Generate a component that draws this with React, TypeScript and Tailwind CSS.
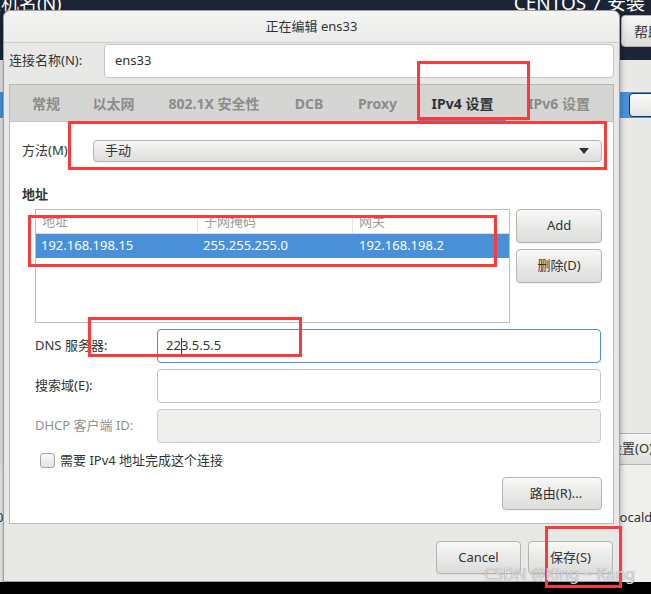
import React from "react";

const btn =
  "flex items-center justify-center rounded-[4px] border border-[#b4b4b0] bg-gradient-to-b from-[#f7f7f6] to-[#dcdcda] text-[13px] text-[#2e3436] shadow-[0_1px_0_rgba(0,0,0,0.05)]";

const input = "h-[34px] rounded-[4px] border bg-white";

const tabs = [
  { label: "常规", w: "w-[60px]" },
  { label: "以太网", w: "w-[75px]" },
  { label: "802.1X 安全性", w: "w-[126px]" },
  { label: "DCB", w: "w-[64px]" },
  { label: "Proxy", w: "w-[73px]" },
  { label: "IPv4 设置", w: "w-[97px]", active: true },
  { label: "IPv6 设置", w: "w-[96px]" },
];

function Dialog() {
  return (
    <div className="absolute left-[3px] top-[10px] flex h-[572px] w-[617px] flex-col rounded-t-[7px] border border-[#9e9e9c] bg-[#e8e8e7] shadow-[0_2px_6px_rgba(0,0,0,0.35)]">
      {/* title bar */}
      <div className="flex h-[32px] shrink-0 items-center justify-center rounded-t-[7px] border-b border-[#cdcdcb] bg-gradient-to-b from-[#f4f4f3] to-[#ebebea] text-[13px] text-[#2e3436]">
        正在编辑 ens33
      </div>

      <div className="flex flex-1 flex-col px-[5px]">
        {/* connection name */}
        <div className="mt-[1px] flex h-[34px] items-center">
          <span className="w-[95px] text-[13px] text-[#2e3436]">连接名称(N):</span>
          <div className={`${input} flex flex-1 items-center border-[#c4c4c0] pl-[10px] text-[13px] text-[#2e3436]`}>
            ens33
          </div>
        </div>

        {/* notebook */}
        <div className="mt-[6px] flex flex-col border border-[#b8b8b5]">
          <div className="flex h-[36px] bg-[#d5d5d4] pl-[6px]">
            {tabs.map((t) => (
              <div key={t.label} className={`relative flex h-full items-center justify-center ${t.w}`}>
                <span
                  className={`text-[14px] font-bold ${t.active ? "text-[#2e3436]" : "text-[#8b8d8b]"}`}
                >
                  {t.label}
                </span>
                {t.active && (
                  <div className="absolute bottom-0 left-[4px] right-[5px] h-[3px] bg-[#4a90d9]" />
                )}
              </div>
            ))}
          </div>

          <div className="flex h-[402px] flex-col border-t border-[#c4c4c2] bg-white pl-[12px] pr-[11px] pt-[12px]">
            {/* method */}
            <div className="flex h-[34px] items-center">
              <span className="w-[71px] text-[13px] text-[#2e3436]">方法(M):</span>
              <div className={`${btn} flex-1 !justify-between pl-[11px] pr-[12px]`}>
                <span>手动</span>
                <span className="h-0 w-0 border-x-[5px] border-t-[6px] border-x-transparent border-t-[#2e3436]" />
              </div>
            </div>

            <div className="mt-[16px] h-[20px] text-[13px] font-bold leading-[20px] text-[#2e3436]">地址</div>

            {/* address table */}
            <div className="mt-[5px] flex gap-[6px] pl-[13px]">
              <div className="flex h-[114px] w-[476px] flex-col border border-[#bdbdbb] bg-white">
                <div className="mt-[6px] flex h-[18px] overflow-hidden border-b border-[#dcdcda] text-[13px] leading-[18px] text-[#9a9c9a]">
                  <div className="-mt-[4px] w-[162px] border-r border-[#e2e2e0] pl-[6px]">地址</div>
                  <div className="-mt-[4px] w-[155px] border-r border-[#e2e2e0] pl-[6px]">子网掩码</div>
                  <div className="-mt-[4px] flex-1 pl-[6px]">网关</div>
                </div>
                <div className="flex h-[24px] items-center bg-[#4a90d9] text-[13px] text-white">
                  <div className="w-[162px] pl-[5px]">192.168.198.15</div>
                  <div className="w-[155px] pl-[5px]">255.255.255.0</div>
                  <div className="flex-1 pl-[6px]">192.168.198.2</div>
                </div>
              </div>
              <div className="flex w-[86px] flex-col gap-[6px]">
                <div className={`${btn} h-[34px]`}>Add</div>
                <div className={`${btn} h-[34px]`}>删除(D)</div>
              </div>
            </div>

            {/* DNS / search / DHCP */}
            <div className="mt-[6px] flex flex-col gap-[6px] pl-[13px] pr-[1px]">
              <div className="flex items-center">
                <span className="w-[122px] text-[13px] text-[#2e3436]">DNS 服务器:</span>
                <div className={`${input} flex flex-1 items-center border-[#4a90d9] pl-[8px] text-[13px] text-[#2e3436]`}>
                  22
                  <span className="relative inline-block h-[16px] w-0">
                    <span className="absolute left-[0px] top-0 h-[17px] w-[1px] bg-[#2e3436]" />
                  </span>
                  3.5.5.5
                </div>
              </div>
              <div className="flex items-center">
                <span className="w-[122px] text-[13px] text-[#2e3436]">搜索域(E):</span>
                <div className={`${input} flex-1 border-[#c4c4c0]`} />
              </div>
              <div className="flex items-center">
                <span className="w-[122px] text-[13px] text-[#8f9190]">DHCP 客户端 ID:</span>
                <div className={`${input} flex-1 border-[#cdcdca] !bg-[#eeeeec]`} />
              </div>
            </div>

            {/* checkbox */}
            <div className="mt-[10px] flex h-[15px] items-center pl-[18px]">
              <div className="h-[15px] w-[15px] shrink-0 rounded-[3px] border border-[#a4a4a1] bg-gradient-to-b from-[#fafafa] to-[#e2e2e0]" />
              <span className="ml-[5px] text-[13px] leading-[15px] text-[#2e3436]">需要 IPv4 地址完成这个连接</span>
            </div>

            <div className="mt-[9px] flex justify-end">
              <div className={`${btn} h-[33px] w-[100px] pl-[8px]`}>路由(R)...</div>
            </div>
          </div>
        </div>

        {/* bottom buttons */}
        <div className="mt-[17px] flex justify-end gap-[7px] pr-[1px]">
          <div className={`${btn} h-[33px] w-[85px]`}>Cancel</div>
          <div className={`${btn} h-[33px] w-[85px]`}>保存(S)</div>
        </div>
      </div>
    </div>
  );
}

export default function App() {
  return (
    <div className="relative h-[594px] w-[651px] overflow-hidden bg-[#e8e8e7] font-['Noto_Sans','Noto_Sans_CJK_SC',sans-serif]">
      {/* desktop behind the dialog */}
      <div className="flex h-full flex-col">
        <div className="flex h-[60px] shrink-0 items-start justify-between bg-[#1c2535]">
          <span className="-ml-[17px] -mt-[9px] whitespace-nowrap text-[18px] leading-[24px] text-white">主机名(N)</span>
          <div className="flex flex-col items-end">
            <span className="-mt-[9px] mr-[6px] whitespace-nowrap text-[19px] leading-[24px] text-white">CENTOS 7 安装</span>
            <div className={`${btn} -mr-[30px] mt-[0px] h-[32px] w-[60px] !justify-start whitespace-nowrap pl-[12px] !text-[14px]`}>
              帮助
            </div>
          </div>
        </div>
        <div className="mt-[32px] flex h-[26px] shrink-0 justify-end bg-[#4a90d9]">
          <div className="-mr-[10px] mt-[1px] h-[24px] w-[32px] rounded-[4px] border border-[#22324f] bg-gradient-to-b from-[#fafafa] to-[#e4e4e2]" />
        </div>
        <div className="mt-[315px] flex shrink-0 justify-end">
          <div className={`${btn} -mr-[30px] h-[32px] w-[121px] !justify-start whitespace-nowrap pl-[48px]`}>设置(O)...</div>
        </div>
        <div className="flex flex-1 flex-col bg-[#efefee]">
          <div className="mt-[42px] flex justify-between text-[13px] leading-[20px] text-[#2e3436]">
            <span className="-ml-[4px]">0)</span>
            <span className="-mr-[40px]">localdomain</span>
          </div>
        </div>
        <div className="h-[12px] shrink-0 bg-black" />
      </div>

      <Dialog />

      {/* red annotation boxes */}
      <div className="absolute left-[417px] top-[61px] h-[59px] w-[113px] border-[3px] border-[#fc3a3a]" />
      <div className="absolute left-[68px] top-[121px] h-[49px] w-[539px] border-[3px] border-[#fc3a3a]" />
      <div className="absolute left-[28px] top-[215px] h-[52px] w-[469px] border-[3px] border-[#fc3a3a]" />
      <div className="absolute left-[88px] top-[317px] h-[40px] w-[214px] border-[3px] border-[#fc3a3a]" />
      <div className="absolute left-[545px] top-[526px] h-[62px] w-[77px] border-[3px] border-[#fc3a3a]" />

      {/* watermark */}
      <div className="absolute left-[484px] top-[563px] text-[16px] leading-[22px] text-[#dedede] [text-shadow:0_0_1px_rgba(0,0,0,0.45)]">
        CSDN @King ~ Kang
      </div>
    </div>
  );
}
